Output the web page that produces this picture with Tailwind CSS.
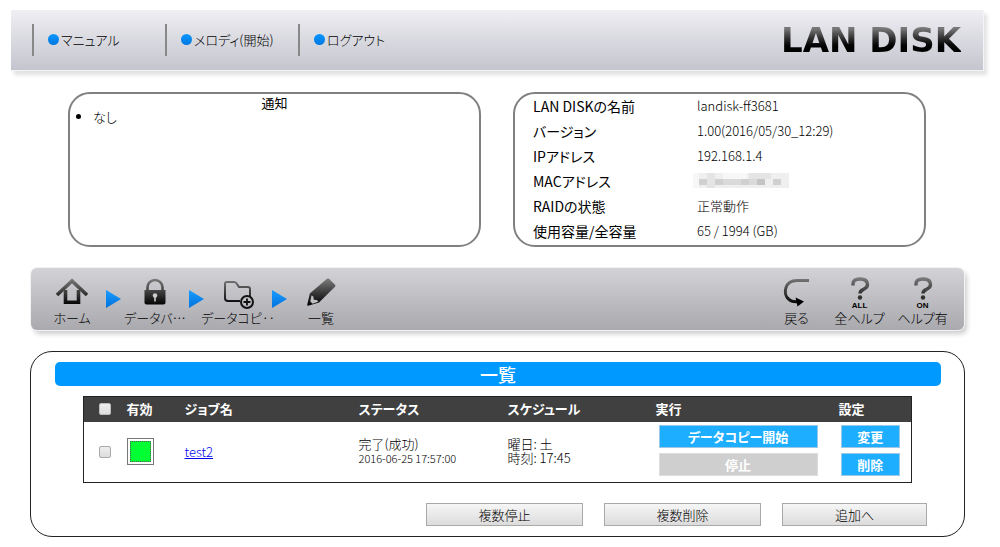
<!DOCTYPE html>
<html lang="ja">
<head>
<meta charset="utf-8">
<meta name="viewport" content="width=device-width, initial-scale=1">
<title>LAN DISK</title>
<script src="https://cdn.jsdelivr.net/npm/@tailwindcss/browser@4"></script>
</head>
<body class="bg-white text-black text-[13px] leading-5 font-light font-['Noto_Sans_CJK_JP',sans-serif] [font-feature-settings:'palt']">

<header class="mt-[10px] ml-[11px] mr-4 h-[61px] flex items-center justify-between border-r border-b border-[#f4f4f6] bg-linear-to-b from-[#efeff4] via-[#d9d9e0] to-[#c5c5cf] shadow-[3px_4px_4px_rgba(0,0,0,0.12)]">
  <nav class="flex pl-[21px] pb-px text-[13px]">
    <a href="#" class="flex w-[133px] h-8 items-center border-l-2 border-[#888] pl-[14px]"><span class="size-[11px] mr-0.5 rounded-full bg-linear-to-b from-[#0a96ff] to-[#0078e0]"></span>マニュアル</a>
    <a href="#" class="flex w-[133px] h-8 items-center border-l-2 border-[#888] pl-[14px]"><span class="size-[11px] mr-0.5 rounded-full bg-linear-to-b from-[#0a96ff] to-[#0078e0]"></span>メロディ(開始)</a>
    <a href="#" class="flex w-[133px] h-8 items-center border-l-2 border-[#888] pl-[14px]"><span class="size-[11px] mr-0.5 rounded-full bg-linear-to-b from-[#0a96ff] to-[#0078e0]"></span>ログアウト</a>
  </nav>
  <h1 class="mr-[22px] text-[34px] leading-8 font-bold font-['DejaVu_Sans',sans-serif] text-transparent bg-clip-text bg-linear-to-b from-[#777] from-15% to-black to-80%">LAN DISK</h1>
</header>

<main>
  <div class="mt-[21px] ml-[68px] mr-[74px] grid grid-cols-2 gap-8">
    <section class="h-[155px] rounded-[22px] border-2 border-[#808080] pt-0.5 px-2 text-[13px] leading-[14px]">
      <h2 class="text-center font-normal">通知</h2>
      <ul class="list-disc pl-[15px]"><li>なし</li></ul>
    </section>
    <section class="h-[155px] rounded-[22px] border-2 border-[#808080] pl-[18px]">
      <dl class="h-[149px] grid grid-cols-[164px_1fr] grid-rows-6 items-center text-[13px]">
        <dt class="text-[14px] font-normal">LAN DISKの名前</dt><dd>landisk-ff3681</dd>
        <dt class="text-[14px] font-normal">バージョン</dt><dd>1.00(2016/05/30_12:29)</dd>
        <dt class="text-[14px] font-normal">IPアドレス</dt><dd>192.168.1.4</dd>
        <dt class="text-[14px] font-normal">MACアドレス</dt>
        <dd><svg class="-ml-1 w-[96px] h-[15px]" viewBox="0 0 96 15" shape-rendering="crispEdges">
          <path fill="#efefef" d="M0 0h96v15H0z"/><path fill="#f7f7f7" d="M0 0h6v15H0zM30 0h24v6H30z"/><path fill="#e4e4e4" d="M14 0h8v6h-8zM56 0h22v6H56zM14 6h8v9h-8z"/>
          <path fill="#d0d0d0" d="M6 6h8v6H6zM22 6h8v6h-8zM48 6h8v6h-8zM80 6h8v6h-8z"/><path fill="#dadada" d="M30 6h18v6H30zM56 6h8v6h-8z"/><path fill="#c4c4c4" d="M64 6h8v6h-8z"/></svg></dd>
        <dt class="text-[14px] font-normal">RAIDの状態</dt><dd>正常動作</dd>
        <dt class="text-[14px] font-normal">使用容量/全容量</dt><dd>65 / 1994 (GB)</dd>
      </dl>
    </section>
  </div>

  <svg width="0" height="0" class="absolute" aria-hidden="true"><defs>
    <linearGradient id="ink" gradientUnits="userSpaceOnUse" x1="0" y1="0" x2="0" y2="32"><stop offset="0.05" stop-color="#777"/><stop offset="0.85" stop-color="#000"/></linearGradient>
    <linearGradient id="blue" x1="0" y1="0" x2="0" y2="1"><stop offset="0" stop-color="#1a9cff"/><stop offset="1" stop-color="#0072dd"/></linearGradient>
  </defs></svg>

  <nav class="mt-[21px] ml-[31px] mr-9 h-[62px] flex justify-between rounded-md bg-linear-to-b from-[#d2d2d7] to-[#a9a9ae] shadow-[0_0_0_1px_#f2f2f4,3px_4px_5px_rgba(0,0,0,0.2)] text-[13px] leading-4 whitespace-nowrap">
    <div class="flex pl-2 pt-[10px]">
      <a href="#" class="w-[66px] flex flex-col items-center"><svg class="size-8 shrink-0" viewBox="0 0 32 32" fill="none" stroke="url(#ink)" stroke-width="3.6"><path d="M1 17 16 3l15 14"/><path d="M9.500 12v12.200h13V12" stroke-width="3.6"/></svg><span>ホーム</span></a>
      <svg class="w-[17px] h-10" viewBox="0 0 17 40"><path d="M1 12v18l15-9z" fill="url(#blue)"/></svg>
      <a href="#" class="w-[66px] flex flex-col items-center"><svg class="size-8 shrink-0" viewBox="0 0 32 32"><path d="M8.500 13v-3.500a7.500 7.500 0 0 1 15 0V13" fill="none" stroke="url(#ink)" stroke-width="2.600"/><path d="M5.500 12h21v12.500a2 2 0 0 1-2 2h-17a2 2 0 0 1-2-2z" fill="url(#ink)"/><circle cx="16" cy="17.500" r="2.300" fill="#ccc"/><path d="M15.200 18h1.600v5.500h-1.600z" fill="#ccc"/></svg><span>データバ…</span></a>
      <svg class="w-[17px] h-10" viewBox="0 0 17 40"><path d="M1 12v18l15-9z" fill="url(#blue)"/></svg>
      <a href="#" class="w-[66px] flex flex-col items-center"><svg class="size-8 shrink-0" viewBox="0 0 32 32" fill="none" stroke="url(#ink)" stroke-width="2"><path d="M18 23H6q-3 0-3-3V6q0-2 2-2h7q2 0 3 2l2 3h9q2 0 2 2v8"/><circle cx="25" cy="24" r="6" stroke="#111"/><path d="M25 20.500v7M21.500 24h7" stroke="#111" stroke-width="1.800"/></svg><span>データコピ‥</span></a>
      <svg class="w-[17px] h-10" viewBox="0 0 17 40"><path d="M1 12v18l15-9z" fill="url(#blue)"/></svg>
      <a href="#" class="w-[66px] flex flex-col items-center"><svg class="size-8 shrink-0" viewBox="0 0 32 32"><path d="M22 .8q1-.8 2 0l6 6q1 1 0 2L14 24.500l-11 3.300q-1 0-.7-1.300L4.800 15.500z" fill="url(#ink)"/><path d="M6.500 17.500l1.800 1 .5 3.300 3.300.2 1 1.700-5.600 2-2.200-2.200z" fill="#c0c0c5"/></svg><span>一覧</span></a>
    </div>
    <div class="flex pr-[10px] pt-[9px]">
      <a href="#" class="w-[63px] flex flex-col items-center"><svg class="w-8 h-[33px]" viewBox="0 0 32 33"><path d="M28 3.500H16C3 3.500 2 17.500 7.500 22q3 3 8.500 2.700" fill="none" stroke="url(#ink)" stroke-width="3"/><path d="M14.500 20.500l8.500 4-6.500 5z" fill="#000"/></svg><span>戻る</span></a>
      <a href="#" class="w-[63px] flex flex-col items-center"><svg class="w-8 h-6" viewBox="0 0 32 24"><path d="M9 8.500V7q0-5 7-5 7.500 0 7.500 5.500 0 3-4 4.800Q16 13.700 16 16.500" fill="none" stroke="url(#ink)" stroke-width="3.400"/><circle cx="16" cy="20.500" r="2.200" fill="#333"/></svg><span class="h-[9px] text-[8px] leading-[9px] font-bold font-['Liberation_Sans',sans-serif]">ALL</span><span>全ヘルプ</span></a>
      <a href="#" class="w-[63px] flex flex-col items-center"><svg class="w-8 h-6" viewBox="0 0 32 24"><path d="M9 8.500V7q0-5 7-5 7.500 0 7.500 5.500 0 3-4 4.800Q16 13.700 16 16.500" fill="none" stroke="url(#ink)" stroke-width="3.400"/><circle cx="16" cy="20.500" r="2.200" fill="#333"/></svg><span class="h-[9px] text-[8px] leading-[9px] font-bold font-['Liberation_Sans',sans-serif]">ON</span><span>ヘルプ有</span></a>
    </div>
  </nav>

  <section class="mt-[21px] ml-[30px] mr-[35px] rounded-[22px] border border-[#222] pt-[10px] pb-[10px] pl-6 pr-[23px]">
    <h2 class="h-6 rounded-[5px] bg-[#0099ff] text-center text-[18px] leading-6 font-medium text-white">一覧</h2>
    <div class="mt-[10px] ml-7 mr-[29px]">
      <table class="w-full table-fixed border border-[#222] border-collapse text-left">
        <colgroup><col class="w-[43px]"><col class="w-[58px]"><col><col class="w-[149px]"><col class="w-[148px]"><col class="w-[183px]"><col class="w-[73px]"></colgroup>
        <thead class="bg-[#404040] text-white text-[13px]">
          <tr class="h-[25px]">
            <th class="pl-[15px]"><input type="checkbox" aria-label="すべて選択" class="block appearance-none size-3 rounded-[2px] border border-[#bbb] bg-linear-to-b from-[#eee] to-[#ddd]"></th>
            <th>有効</th><th>ジョブ名</th><th>ステータス</th><th>スケジュール</th><th>実行</th><th>設定</th>
          </tr>
        </thead>
        <tbody>
          <tr class="h-[61px]">
            <td class="pl-[15px]"><input type="checkbox" aria-label="test2を選択" class="block appearance-none size-3 rounded-[2px] border border-[#aaa] bg-linear-to-b from-[#eee] to-[#ddd]"></td>
            <td><button type="button" aria-label="有効" class="block size-[27px] border border-[#777] bg-white p-0.5"><span class="block size-full border border-dotted border-[#555] bg-[#00ff33]"></span></button></td>
            <td><a href="#" class="text-[#0000ee] underline">test2</a></td>
            <td class="leading-[14px] pb-0.5"><p>完了(成功)</p><p class="text-[11px]">2016-06-25 17:57:00</p></td>
            <td class="leading-[14px] pb-0.5"><p>曜日: 土</p><p>時刻: 17:45</p></td>
            <td class="pl-[3px] pr-[21px]"><div class="grid gap-[5px] pb-[3px] pt-px">
              <button type="button" class="h-[23px] border border-[#9cc8e6] bg-[#1eaeff] text-white font-bold">データコピー開始</button>
              <button type="button" disabled class="h-[23px] border border-[#ddd] bg-[#cfcfcf] text-white font-bold">停止</button></div></td>
            <td class="pl-0.5 pr-[11px]"><div class="grid gap-[5px] pb-[3px] pt-px">
              <button type="button" class="h-[23px] border border-[#9cc8e6] bg-[#1eaeff] text-white font-bold">変更</button>
              <button type="button" class="h-[23px] border border-[#9cc8e6] bg-[#1eaeff] text-white font-bold">削除</button></div></td>
          </tr>
        </tbody>
      </table>
    </div>
    <div class="mt-5 mr-[14px] flex justify-end gap-[21px]">
      <button type="button" class="w-[157px] h-[23px] border border-[#a9a9a9] bg-linear-to-b from-[#f6f6f6] to-[#dcdcdc]">複数停止</button>
      <button type="button" class="w-[157px] h-[23px] border border-[#a9a9a9] bg-linear-to-b from-[#f6f6f6] to-[#dcdcdc]">複数削除</button>
      <button type="button" class="w-[145px] h-[23px] border border-[#a9a9a9] bg-linear-to-b from-[#f6f6f6] to-[#dcdcdc]">追加へ</button>
    </div>
  </section>
</main>
</body>
</html>
